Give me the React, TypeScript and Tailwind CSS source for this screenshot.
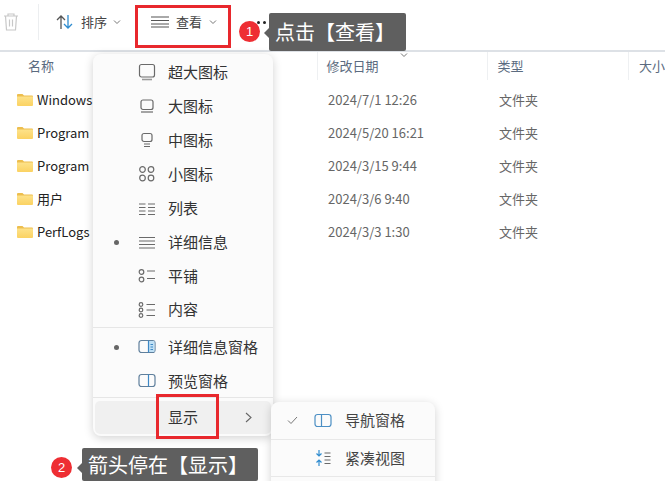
const font = "font-['Noto_Sans_CJK_SC','Noto_Sans',sans-serif]";

const rows = [
  { name: "Windows", date: "2024/7/1 12:26" },
  { name: "Program", date: "2024/5/20 16:21" },
  { name: "Program", date: "2024/3/15 9:44" },
  { name: "用户", date: "2024/3/6 9:40" },
  { name: "PerfLogs", date: "2024/3/3 1:30" },
];

function Chevron({ className = "" }: { className?: string }) {
  return (
    <svg width="8" height="6" viewBox="0 0 8 6" fill="none" stroke="#777" strokeWidth="1" className={className}>
      <path d="M1 1.5 4 4.5 7 1.5" />
    </svg>
  );
}

function Folder() {
  return (
    <svg width="16" height="14" viewBox="0 0 16 14" className="shrink-0">
      <defs>
        <linearGradient id="folder" x1="0" y1="0" x2="0" y2="1">
          <stop offset="0" stopColor="#fde28a" />
          <stop offset="1" stopColor="#fbd262" />
        </linearGradient>
      </defs>
      <path d="M0 2a1 1 0 0 1 1-1h4.500l1.500 1.500h8a1 1 0 0 1 1 1V4H0Z" fill="#edbe4e" />
      <path d="M0 3.500h16V12a1 1 0 0 1-1 1H1a1 1 0 0 1-1-1Z" fill="url(#folder)" />
    </svg>
  );
}

function Icon({ children }: { children: React.ReactNode }) {
  return (
    <svg width="18" height="18" viewBox="0 0 18 18" fill="none" stroke="#6a6a6a" strokeWidth="1.2" className="shrink-0">
      {children}
    </svg>
  );
}

const icons: Record<string, React.ReactNode> = {
  xl: (
    <Icon>
      <rect x="1.500" y="1.500" width="15" height="12.500" rx="2" />
      <path d="M4 16.500h10" strokeWidth="1.600" stroke="#999" />
    </Icon>
  ),
  lg: (
    <Icon>
      <rect x="3" y="3" width="12" height="9.500" rx="2" />
      <path d="M3 15h12" />
    </Icon>
  ),
  md: (
    <Icon>
      <rect x="4" y="2.500" width="10" height="8" rx="2" />
      <path d="M6 13h6M6 15.500h6" />
    </Icon>
  ),
  sm: (
    <Icon>
      <circle cx="4.500" cy="4.500" r="2.800" />
      <circle cx="13" cy="4.500" r="2.800" />
      <circle cx="4.500" cy="13" r="2.800" />
      <circle cx="13" cy="13" r="2.800" />
    </Icon>
  ),
  list: (
    <Icon>
      <path d="M1 4h6.500M1 7.500h6.500M1 11h6.500M1 14.500h6.500M10 4h7M10 7.500h7M10 11h7M10 14.500h7" />
    </Icon>
  ),
  details: (
    <Icon>
      <path d="M1 3.500h16M1 7h16M1 10.500h16M1 14h16" />
    </Icon>
  ),
  tiles: (
    <Icon>
      <circle cx="3.500" cy="5" r="2.300" />
      <circle cx="3.500" cy="12.500" r="2.300" />
      <path d="M9 4h8M9 11.500h8" />
    </Icon>
  ),
  content: (
    <Icon>
      <circle cx="3" cy="3.500" r="1.800" />
      <circle cx="3" cy="9" r="1.800" />
      <circle cx="3" cy="14.500" r="1.800" />
      <path d="M8.500 3.500h8.500M8.500 9h8.500M8.500 14.500h8.500" />
    </Icon>
  ),
  detailPane: (
    <Icon>
      <rect x="1" y="2.500" width="16" height="12" rx="2.500" stroke="#5f7f9c" />
      <rect x="10.500" y="3" width="6" height="11" fill="#bfe0f5" stroke="none" />
      <path d="M10.500 2.500v12" stroke="#3d88c5" />
      <path d="M12.500 6.500h2.500M12.500 9h2.500M12.500 11.500h2.500" stroke="#3d88c5" strokeWidth="1" />
    </Icon>
  ),
  previewPane: (
    <Icon>
      <rect x="1" y="2.500" width="16" height="12" rx="2.500" stroke="#5f7f9c" />
      <path d="M10.500 2.500v12" stroke="#3d88c5" />
    </Icon>
  ),
  navPane: (
    <Icon>
      <rect x="1" y="2.500" width="16" height="12" rx="2.500" stroke="#4c8fc4" />
      <path d="M7.500 2.500v12" stroke="#4c8fc4" />
    </Icon>
  ),
  compact: (
    <Icon>
      <path d="M5 1v6M2.500 4.500 5 7l2.500-2.500M5 17v-6M2.500 13.500 5 11l2.500 2.500" stroke="#2f8ccf" />
      <path d="M10.500 4h6M10.500 7.500h6M10.500 11h6M10.500 14.500h6" />
    </Icon>
  ),
};

function MenuItem({ icon, label, dot, height }: { icon: string; label: string; dot?: boolean; height: string }) {
  return (
    <div className={`flex items-center ${height}`}>
      <div className="w-[45px] flex justify-center pl-[1px]">
        {dot && <span className="size-[5px] rounded-full bg-[#666]" />}
      </div>
      {icons[icon]}
      <span className="ml-[12px] text-[15px] text-[#333]">{label}</span>
    </div>
  );
}

function Badge({ n, className }: { n: number; className: string }) {
  return (
    <div className={`absolute size-[21px] rounded-full bg-[#ee2e33] flex items-center justify-center text-white text-[13px] font-['Liberation_Sans',sans-serif] ${className}`}>
      {n}
    </div>
  );
}

export default function App() {
  return (
    <div className={`relative w-[665px] h-[481px] overflow-hidden bg-white ${font}`}>
      {/* toolbar */}
      <div className="h-[52px] flex items-center border-b-2 border-[#dde1e6] text-[#444]">
        <svg width="18" height="20" viewBox="0 0 18 20" fill="none" stroke="#c8c8c8" strokeWidth="1.2" className="ml-[2px] mt-[-6px]">
          <path d="M2 4h14M6 4V2h6v2M3.500 4 4.500 18h9l1-14M7.500 7.500v7M10.500 7.500v7" />
        </svg>
        <div className="ml-[18px] mt-[-6px] h-[36px] w-px bg-[#eceef0]" />
        <div className="ml-[16px] mt-[-6px] flex items-center">
          <svg width="20" height="16" viewBox="0 0 20 16" fill="none" strokeWidth="1.300">
            <path d="M6 15V2M2 6l4-4 4 4" stroke="#555" />
            <path d="M13 1v13M9 10l4 4 4-4" stroke="#2f8ccf" />
          </svg>
          <span className="ml-[6px] text-[13px]">排序</span>
          <Chevron className="ml-[6px]" />
        </div>
        <div className="ml-[30px] mt-[-6px] flex items-center">
          <svg width="18" height="12" viewBox="0 0 18 12" fill="none" stroke="#555" strokeWidth="1.100">
            <path d="M0 1h18M0 4.500h18M0 8h18M0 11h18" />
          </svg>
          <span className="ml-[7px] text-[13px]">查看</span>
          <Chevron className="ml-[7px]" />
        </div>
        <div className="ml-[40px] mt-[-6px] flex gap-[3px]">
          <span className="size-[3px] rounded-full bg-[#222]" />
          <span className="size-[3px] rounded-full bg-[#222]" />
          <span className="size-[3px] rounded-full bg-[#222]" />
        </div>
      </div>

      {/* column headers */}
      <div className="h-[28px] flex items-center text-[13px] text-[#5b6b80]">
        <div className="w-[321px] pl-[28px] h-full flex items-center border-r border-[#eef0f2]">名称</div>
        <div className="relative w-[172px] pl-[7px] h-full flex items-center border-r border-[#eef0f2]">
          <span className="ml-[2px]">修改日期</span>
          <Chevron className="absolute left-[82px] top-0" />
        </div>
        <div className="w-[143px] pl-[10px] h-full flex items-center border-r border-[#eef0f2]">类型</div>
        <div className="pl-[10px] whitespace-nowrap">大小</div>
      </div>

      {/* rows */}
      <div className="pt-[3px]">
        {rows.map((r, i) => (
          <div key={i} className="h-[33px] flex items-center text-[13px]">
            <div className="w-[321px] pl-[17px] flex items-center">
              <Folder />
              <span className="ml-[4px] text-[#222]">{r.name}</span>
            </div>
            <div className="w-[172px] pl-[7px] text-[#666]">{r.date}</div>
            <div className="pl-[6px] text-[#666]">文件夹</div>
          </div>
        ))}
      </div>

      {/* view menu */}
      <div className="absolute left-[93px] top-[54px] w-[180px] h-[382px] rounded-[8px] bg-[#fbfbfb] shadow-[0_2px_10px_rgba(0,0,0,0.18)] pt-[1px] flex flex-col">
        <MenuItem icon="xl" label="超大图标" height="h-[34px]" />
        <MenuItem icon="lg" label="大图标" height="h-[34px]" />
        <MenuItem icon="md" label="中图标" height="h-[34px]" />
        <MenuItem icon="sm" label="小图标" height="h-[34px]" />
        <MenuItem icon="list" label="列表" height="h-[35px]" />
        <MenuItem icon="details" label="详细信息" dot height="h-[33px]" />
        <MenuItem icon="tiles" label="平铺" height="h-[34px]" />
        <MenuItem icon="content" label="内容" height="h-[33px]" />
        <div className="h-px bg-[#e6e6e6] mt-[1px] mb-[1px]" />
        <MenuItem icon="detailPane" label="详细信息窗格" dot height="h-[36px]" />
        <MenuItem icon="previewPane" label="预览窗格" height="h-[32px]" />
        <div className="h-px bg-[#e6e6e6]" />
        <div className="ml-[2px] mr-[2px] mt-[3px] h-[33px] rounded-[5px] bg-[#f0f0f0] flex items-center">
          <span className="ml-[73px] text-[15px] text-[#333]">显示</span>
          <svg width="7" height="11" viewBox="0 0 7 11" fill="none" stroke="#666" strokeWidth="1.100" className="ml-[47px]">
            <path d="M1 1l5 4.500-5 4.500" />
          </svg>
        </div>
      </div>

      {/* sub menu */}
      <div className="absolute left-[271px] top-[402px] w-[164px] h-[100px] rounded-[8px] bg-[#fbfbfb] shadow-[0_2px_10px_rgba(0,0,0,0.18)] text-[15px] text-[#444]">
        <div className="h-[38px] flex items-center border-b border-[#e8e8e8]">
          <svg width="11" height="9" viewBox="0 0 11 9" fill="none" stroke="#777" strokeWidth="1" className="ml-[16px]">
            <path d="M1 4.500 4 7.500 10 1" />
          </svg>
          <div className="ml-[16px]">{icons.navPane}</div>
          <span className="ml-[13px]">导航窗格</span>
        </div>
        <div className="h-[37px] flex items-center border-b border-[#e8e8e8]">
          <div className="ml-[43px]">{icons.compact}</div>
          <span className="ml-[13px]">紧凑视图</span>
        </div>
      </div>

      {/* annotations */}
      <div className="absolute left-[135px] top-[5px] w-[96px] h-[43px] border-[3px] border-[#e8282d]" />
      <div className="absolute left-[156px] top-[394px] w-[63px] h-[45px] border-[3px] border-[#e8282d]" />

      <Badge n={1} className="left-[239px] top-[21px]" />
      <div className="absolute left-[264px] top-[28px] size-0 border-y-[5px] border-y-transparent border-r-[5px] border-r-[#5f5f5f]" />
      <div className="absolute left-[269px] top-[13px] w-[137px] h-[38px] rounded-[2px] bg-[#5f5f5f] text-white text-[20px] pl-[6px] flex items-center whitespace-nowrap">
        点击【查看】
      </div>

      <Badge n={2} className="left-[51px] top-[457px]" />
      <div className="absolute left-[77px] top-[463px] size-0 border-y-[5px] border-y-transparent border-r-[5px] border-r-[#5f5f5f]" />
      <div className="absolute left-[82px] top-[448px] w-[176px] h-[33px] rounded-[2px] bg-[#5f5f5f] text-white text-[20px] pl-[6px] flex items-center whitespace-nowrap">
        箭头停在【显示】
      </div>
    </div>
  );
}
